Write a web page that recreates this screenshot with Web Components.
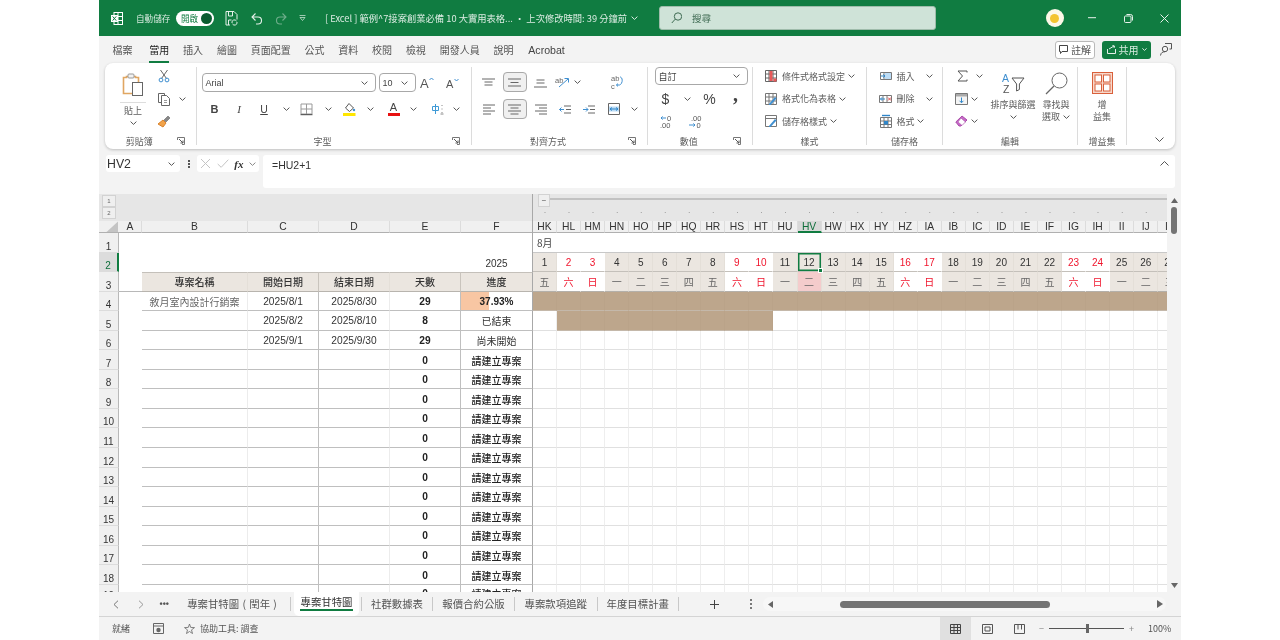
<!DOCTYPE html>
<html lang="zh-Hant">
<head>
<meta charset="utf-8">
<title>Excel</title>
<style>
  html, body { margin: 0; height: 100%; background: #fff; overflow: hidden; }
  body { font-family: "Liberation Sans", "Noto Sans CJK TC", sans-serif; }
</style>
</head>
<body>
<excel-window></excel-window>
<script>
const CJK = `"Noto Sans CJK TC", "Liberation Sans", sans-serif`;
const ARIAL = `"Liberation Sans", "Noto Sans CJK TC", sans-serif`;

const svg = (w, h, body) => `<svg width="${w}" height="${h}" viewBox="0 0 ${w} ${h}" fill="none">${body}</svg>`;
const chev = (c = '#555') => svg(7, 4, `<path d="M.6.6l2.9 2.8L6.4.6" stroke="${c}"/>`);
const box = (w, inner = '', style = '') => `<span class="b" style="width:${w}px;${style}">${inner}</span>`;

const ICONS = {
  paste: svg(22, 24, `<path d="M1.5 4.5h3v-1h9v1h3v16h-15z" stroke="#e0a662" stroke-width="1.6" fill="#fff"/><rect x="6" y="1" width="6" height="4" rx="1" stroke="#999" fill="#f2f2f2"/><rect x="10.5" y="9.5" width="10" height="13" fill="#fff" stroke="#666"/>`),
  cut: svg(12, 14, `<path d="M2.5 1l6 8.5M9.5 1l-6 8.5" stroke="#666"/><circle cx="3" cy="11" r="1.9" stroke="#3f8fd0"/><circle cx="9" cy="11" r="1.9" stroke="#3f8fd0"/>`),
  copy: svg(14, 14, `<path d="M4 10.5H1.5v-9h6V4" stroke="#666"/><path d="M4.5 3.5h5l3 3v7h-8z" stroke="#666" fill="#fff"/><path d="M7 8.5h3M7 10.5h3" stroke="#999"/>`),
  brush: svg(14, 13, `<path d="M6 5l3 3-3 4-5-3z" fill="#f1a34a" stroke="#d9822b"/><path d="M7 5l4-4 2 2-4 4z" fill="#888" stroke="#666" stroke-width=".6"/>`),
  borders: svg(13, 13, `<path d="M1 1h11v10H1zM6.5 1v10M1 6h11" stroke="#9a9a9a"/><path d="M.5 11.7h12" stroke="#444"/>`),
  fill: svg(13, 14, `<path d="M6 1.5l4.5 4.5L6.5 9.5 2.5 6z" stroke="#555" fill="#fff"/><circle cx="11" cy="8" r="1.2" fill="#3f8fd0"/><rect y="11" width="12.5" height="3" fill="#ffe600"/>`),
  fontc: `<span class="ac"><span>A</span><i></i></span>`,
  phon: svg(14, 13, `<path d="M1.5 3.5h6v4h-6zM4.5 1v10" stroke="#3f9ad6"/><path d="M11 2v1M11 5.5v1M11 9v1M9.5 11h3" stroke="#888"/>`),
  top: svg(13, 9, `<path d="M0 1h13M2.5 4h8M2.5 7h8" stroke="#666"/>`),
  mid: svg(13, 11, `<path d="M0 2h13M2.5 5.5h8M0 9h13" stroke="#666"/>`),
  bot: svg(13, 11, `<path d="M2.5 3h8M2.5 6h8M0 10h13" stroke="#666"/>`),
  orient: svg(16, 12, `<text x="0" y="7" font-size="7.5" fill="#666" font-family="Liberation Sans">ab</text><path d="M4 11l9-8M9.5 2.5H13.5V6.5" stroke="#3f8fd0"/>`),
  wrap: svg(12, 15, `<text x="0" y="6" font-size="7.5" fill="#666" font-family="Liberation Sans">ab</text><text x="0" y="14" font-size="7.5" fill="#666" font-family="Liberation Sans">c</text><path d="M9 2c3 0 3 7-.5 8H5.5M7 8.6L5.4 10 7 11.4" stroke="#3f8fd0"/>`),
  al: svg(12, 11, `<path d="M0 1h12M0 4h8M0 7h12M0 10h8" stroke="#666"/>`),
  ac: svg(13, 11, `<path d="M0 1h13M2.5 4h8M0 7h13M2.5 10h8" stroke="#666"/>`),
  ar: svg(12, 11, `<path d="M0 1h12M4 4h8M0 7h12M4 10h8" stroke="#666"/>`),
  outd: svg(12, 9, `<path d="M5 1h7M7 4.5h5M5 8h7" stroke="#666"/><path d="M5 4.5H.5M2.5 2.5l-2 2 2 2" stroke="#3f8fd0"/>`),
  ind: svg(12, 9, `<path d="M5 1h7M7 4.5h5M5 8h7" stroke="#666"/><path d="M0 4.5h5M3 2.5l2 2-2 2" stroke="#3f8fd0"/>`),
  merge: svg(12, 12, `<path d="M.5.5h11v11H.5z" stroke="#666"/><rect x="1" y="3.5" width="10" height="5" fill="#bcdcf5"/><path d="M2 6h8M4 4.5L2 6l2 1.5M8 4.5L10 6 8 7.5" stroke="#2f86c9"/>`),
  dec1: svg(12, 13, `<path d="M6 3H1M2.6 1.4L1 3l1.6 1.6" stroke="#3f8fd0"/><text x="7" y="6" font-size="7.5" fill="#555" font-family="Liberation Sans">0</text><text x="0" y="12.5" font-size="7.5" fill="#555" font-family="Liberation Sans">.00</text>`),
  dec2: svg(14, 13, `<text x="3" y="6" font-size="7.5" fill="#555" font-family="Liberation Sans">.00</text><path d="M1 10h6M5.4 8.4L7 10l-1.6 1.6" stroke="#3f8fd0"/><text x="8.5" y="12.5" font-size="7.5" fill="#555" font-family="Liberation Sans">0</text>`),
  cond: svg(12, 12, `<path d="M.5.5h11v11H.5zM4 .5v11M8 .5v11M.5 4h11M.5 8h11" stroke="#666"/><rect x="4.5" y="1" width="3" height="10" fill="#e85a5a"/><rect x="8.5" y="8.5" width="3" height="3" fill="#e85a5a"/>`),
  table: svg(12, 12, `<path d="M.5.5h11v11H.5zM.5 4h11M4 .5v11M8 .5v11M.5 8h11" stroke="#777"/><path d="M4 11L10 4l1.5 1.5-6 6.5H4z" fill="#3f8fd0"/>`),
  cstyle: svg(12, 12, `<path d="M.5.5h11v11H.5z" stroke="#777"/><path d="M.5 3.5h11" stroke="#777"/><path d="M4 11L10 4l1.5 1.5-6 6.5H4z" fill="#3f8fd0"/>`),
  cins: svg(12, 12, `<path d="M.5 2.5h11v7H.5zM4 2.5v7M8 2.5v7" stroke="#777"/><rect x="5" y="3" width="6" height="6" fill="#bcdcf5"/><path d="M1 6h4M3.4 4.4L5 6 3.4 7.6" stroke="#2f86c9"/>`),
  cdel: svg(13, 12, `<path d="M.5 2.5h12v7H.5zM4 2.5v7M8 2.5v7" stroke="#777"/><path d="M6 6H1.5M3 4.4L1.5 6 3 7.6" stroke="#2f86c9"/><path d="M9 4.5l3 3M12 4.5l-3 3" stroke="#e04b4b"/>`),
  cfmt: svg(12, 14, `<path d="M.5 3.5h11v10H.5zM.5 7h11M.5 10.5h11M4 3.5v10M8 3.5v10" stroke="#777"/><path d="M2 1.5h8" stroke="#2f86c9" stroke-width="1.4"/><rect x="4" y="7" width="4" height="3.5" fill="#2f86c9"/>`),
  sigma: svg(11, 12, `<path d="M10 2.5V1H1l4.5 5L1 11h9V9.5" stroke="#555"/>`),
  fdown: svg(13, 12, `<path d="M.5.5h12v11H.5z" stroke="#777" fill="#f4f4f4"/><path d="M1 1h11v2.5H1z" fill="#aaa"/><path d="M6.5 4.5v5M4.6 7.8l1.9 2 1.9-2" stroke="#2f86c9"/>`),
  eraser: svg(13, 12, `<path d="M.8 7L7 1l5 4-6 6H4z" fill="#c76ac9" stroke="#a94ba8"/><path d="M6 3l4.5 4-3.5 3.5-4-3.6z" fill="#fff" stroke="#a94ba8" stroke-width=".6"/>`),
  sort: svg(23, 21, `<text x="0" y="9" font-size="10.5" fill="#3f8fd0" font-family="Liberation Sans">A</text><text x="1" y="20" font-size="10.5" fill="#555" font-family="Liberation Sans">Z</text><path d="M10 5h12l-4.6 6v5.5l-2.8 1.5V11z" stroke="#555" fill="#fff"/>`),
  find: svg(23, 23, `<circle cx="14.5" cy="8.5" r="7.5" stroke="#666" fill="#fff"/><path d="M9 14L1 22" stroke="#666" stroke-width="1.2"/>`),
  addin: svg(21, 22, `<rect x=".5" y=".5" width="20" height="21" stroke="#d9603b" fill="#f7d9cc"/><rect x="3" y="3" width="6.5" height="7" fill="#fff" stroke="#d9603b"/><rect x="11.5" y="3" width="6.5" height="7" fill="#fff" stroke="#d9603b"/><rect x="3" y="12" width="6.5" height="7" fill="#fff" stroke="#d9603b"/><rect x="11.5" y="12" width="6.5" height="7" fill="#fff" stroke="#d9603b"/>`),
  launch: svg(8, 8, `<path d="M.5 3V.5h7v7H5" stroke="#777"/><path d="M2 2l4 4M6 3.5V6H3.5" stroke="#555"/>`),
  grow: svg(15, 16, `<text x="0" y="13" font-size="13" fill="#555" font-family="Liberation Sans">A</text><path d="M9.5 5l2-2 2 2" stroke="#3f8fd0"/>`),
  shrink: svg(15, 16, `<text x="1" y="13" font-size="11" fill="#555" font-family="Liberation Sans">A</text><path d="M9.5 4l2 2 2-2" stroke="#3f8fd0"/>`),
};

class TitleBar extends HTMLElement {
  connectedCallback() {
    const shadow = this.attachShadow({ mode: 'open' });
    shadow.innerHTML = `
      <style>
        :host { display: flex; align-items: center; height: 36px; background: #107c41; color: #fff; font: 8.6px ${CJK}; }
        svg { display: block; flex: none; }
        .auto { margin-left: 13px; width: 40px; color: #d8ebe0; font-size: 8.6px; white-space: nowrap; }
        .toggle { display: flex; align-items: center; justify-content: space-between; box-sizing: border-box; width: 38px; height: 15px; padding: 0 2px 0 5px; background: #fff; border-radius: 8px; color: #107c41; font-size: 8.6px; }
        .toggle i { width: 11px; height: 11px; background: #0b5c30; border-radius: 50%; }
        .doc { width: 305px; white-space: nowrap; font-size: 9.3px; color: #dcece3; display: flex; align-items: center; gap: 4px; }
        .search { display: flex; align-items: center; box-sizing: border-box; width: 276.5px; height: 24px; margin-left: 28px; padding-left: 11px; background: #cfe3d8; border: 1px solid #9fbcab; border-radius: 3px; color: #3f6b53; font-size: 9.6px; gap: 10px; }
        .avatar { width: 18px; height: 18px; margin-left: 110px; border-radius: 50%; background: #fdf8e8; display: flex; align-items: center; justify-content: center; }
        .avatar i { width: 9px; height: 9px; border-radius: 50%; background: #f4c430; }
      </style>
      <span style="margin-left:12px">${svg(12, 13, `<rect x="3" y=".5" width="8.5" height="12" stroke="#fff" fill="#107c41"/><path d="M7 .5v12M3 4.5h8.5M3 8.5h8.5" stroke="#fff"/><rect y="3" width="7" height="7" fill="#fff"/><path d="M1.6 4.4l3.6 4.2M5.2 4.4L1.6 8.6" stroke="#107c41"/>`)}</span>
      <span class="auto">自動儲存</span>
      <span class="toggle">開啟<i></i></span>
      <span style="margin-left:11px">${svg(13, 15, `<path d="M1 .5h8l3 3v5M5 14H1V.5" stroke="#e4f0e9"/><path d="M3.5 1v4h4V1M3.5 14V9h3" stroke="#e4f0e9"/><path d="M7 12a2.5 2.5 0 0 1 4.5-2M12 11a2.5 2.5 0 0 1-4.5 2" stroke="#e4f0e9"/>`)}</span>
      <span style="margin-left:13px">${svg(11, 13, `<path d="M1.5 5h5.5a3 3 0 0 1 0 7H5M4.5 1.5L1 5l3.5 3.5" stroke="#e4f0e9" stroke-width="1.1"/>`)}</span>
      <span style="margin-left:14px">${svg(11, 13, `<path d="M9.5 5H4a3 3 0 0 0 0 7h2M6.5 1.5L10 5 6.5 8.5" stroke="#6fae8b" stroke-width="1.1"/>`)}</span>
      <span style="margin-left:12px">${svg(7, 6, `<path d="M.5 .5h6M1 2.5h5l-2.5 3z" stroke="#dcece3" stroke-width=".7"/>`)}</span>
      <span class="doc" style="margin-left:19px">[ Excel ] 範例^7接案創業必備 10 大實用表格... • 上次修改時間: 39 分鐘前 ${svg(7, 4, `<path d="M.6.6l2.9 2.8L6.4.6" stroke="#dcece3"/>`)}</span>
      <span class="search" style="margin-left:29px">${svg(11, 12, `<circle cx="7" cy="4.5" r="3.7" stroke="#3f6b53"/><path d="M4.2 7.2L.8 11" stroke="#3f6b53"/>`)}搜尋</span>
      <span class="avatar"><i></i></span>
      <span style="margin-left:24px">${svg(8, 2, `<path d="M0 .7h8" stroke="#e8f2ec"/>`)}</span>
      <span style="margin-left:28px">${svg(9, 9, `<rect x=".5" y="2" width="6.5" height="6.5" rx="1" stroke="#e8f2ec"/><path d="M2.5.5h4a2 2 0 0 1 2 2v4" stroke="#e8f2ec"/>`)}</span>
      <span style="margin-left:27px">${svg(9, 9, `<path d="M.5.5l8 8M8.5.5l-8 8" stroke="#e8f2ec"/>`)}</span>`;
  }
}

class RibbonTabs extends HTMLElement {
  connectedCallback() {
    const shadow = this.attachShadow({ mode: 'open' });
    const tabs = ['檔案', '當用', '插入', '繪圖', '頁面配置', '公式', '資料', '校閱', '檢視', '開發人員', '說明', 'Acrobat'];
    shadow.innerHTML = `
      <style>
        :host { display: flex; align-items: center; height: 27px; padding-left: 13.5px; background: #f3f3f3; font: 10px ${CJK}; color: #555; }
        .tabs { display: flex; gap: 13.8px; flex: 1; }
        .tab { position: relative; line-height: 26px; white-space: nowrap; }
        .tab.on { margin-left: 3px; color: #222; }
        .tab.on::after { content: ""; position: absolute; left: 0; right: 0; bottom: 0; height: 2px; background: #107c41; }
        .tab.lat { margin-left: 1px; font-family: ${ARIAL}; font-size: 10.6px; color: #444; }
        .cmt, .share { display: flex; align-items: center; justify-content: center; box-sizing: border-box; height: 18px; border-radius: 3px; gap: 3px; }
        .cmt { width: 40px; background: #fff; border: 1px solid #b9b9b9; color: #555; }
        .share { width: 49px; margin-left: 7px; background: #107c41; color: #d7ebdf; }
        svg { display: block; flex: none; }
        .me { margin: 0 9px 0 9px; }
      </style>
      <div class="tabs">${tabs.map((t) => `<span class="tab${t === '當用' ? ' on' : ''}${t === 'Acrobat' ? ' lat' : ''}">${t}</span>`).join('')}</div>
      <span class="cmt">${svg(9, 9, `<path d="M.5.5h8v6H3L1.5 8.5v-2h-1z" stroke="#444"/>`)}註解</span>
      <span class="share">${svg(9, 9, `<path d="M.5 4v4.5h8V4M2 4l5-3M5.5.5L7.5 1 7 3" stroke="#e4f0e9"/>`)}共用${svg(5, 3, `<path d="M.4.4l2.1 2 2.1-2" stroke="#d7ebdf"/>`)}</span>
      <span class="me">${svg(12, 13, `<circle cx="5" cy="6" r="2.7" stroke="#555"/><path d="M.5 12.5c.5-3 2-3.7 4.5-3.7" stroke="#555"/><path d="M5 .5h6.5v5.5H9.5" stroke="#555"/>`)}</span>`;
  }
}

// one block of the ribbon with its caption under it
class RibbonGroup extends HTMLElement {
  connectedCallback() {
    const shadow = this.attachShadow({ mode: 'open' });
    const launcher = this.hasAttribute('launcher');
    shadow.innerHTML = `
      <style>
        :host { display: block; flex: none; box-sizing: border-box; height: 78px; margin-top: 4px; border-right: 1px solid #dcdcdc; font: 9px ${CJK}; color: #5c5c5c; }
        .body { display: flow-root; height: 66px; }
        .cap { display: flex; align-items: center; height: 16px; }
        .cap span { flex: 1; text-align: center; }
        .cap i { width: 22px; display: flex; justify-content: flex-start; padding-left: 3px; box-sizing: border-box; }
        svg { display: block; }
      </style>
      <div class="body"><slot></slot></div>
      <div class="cap"><span>${this.getAttribute('label')}</span>${launcher ? `<i>${ICONS.launch}</i>` : ''}</div>`;
    this.style.width = this.getAttribute('width') + 'px';
  }
}

class RibbonBar extends HTMLElement {
  connectedCallback() {
    const shadow = this.attachShadow({ mode: 'open' });
    const I = ICONS;
    const c = chev();
    const listRow = (icon, label, w, ml = 12) => `<div class="fr" style="padding-left:${ml}px">${box(12, icon)}<span style="margin-left:5px;white-space:nowrap">${label}</span>${w}</div>`;
    shadow.innerHTML = `
      <style>
        :host { display: flex; box-sizing: border-box; width: 1070px; height: 86px; margin-left: 6px; background: #fff; border-radius: 8px; box-shadow: 0 1px 3px rgba(0,0,0,.22); font: 9px ${CJK}; color: #5c5c5c; }
        svg { display: block; flex: none; }
        .b { display: flex; align-items: center; justify-content: center; flex: none; height: 100%; }
        .fr { display: flex; align-items: center; }
        .three { display: grid; grid-auto-rows: 22.5px; margin-top: -2px; }
        .sel { display: flex; align-items: center; justify-content: space-between; box-sizing: border-box; height: 19px; padding: 0 7px 0 3px; border: 1px solid #a8a8a8; border-radius: 4px; font: 9px ${ARIAL}; color: #444; flex: none; }
        .on { background: #f0f0f0; outline: 1px solid #a9a9a9; outline-offset: -1px; border-radius: 4px; }
        .un { text-decoration: underline; }
        .ac { display: flex; flex-direction: column; align-items: center; font: 11px "Liberation Sans"; line-height: 10px; color: #444; }
        .ac i { width: 12px; height: 3px; margin-top: 1px; background: #e81010; }
        .col { display: flex; flex-direction: column; align-items: center; flex: none; line-height: 12px; white-space: nowrap; }
      </style>

      <ribbon-group label="剪貼簿" launcher width="91.5">
        <div class="fr" style="align-items:flex-start">
          <div class="col" style="width:46px;margin-left:5px;padding-top:6px">
            ${I.paste}
            <span style="width:26px;height:1px;background:#ddd;margin:5px 0 2px"></span>
            <span>貼上</span>
            <span style="margin-top:4px">${c}</span>
          </div>
          <div class="three">
            <div class="fr">${box(16, I.cut)}</div>
            <div class="fr">${box(16, I.copy)}${box(20, c)}</div>
            <div class="fr">${box(16, I.brush)}</div>
          </div>
        </div>
      </ribbon-group>

      <ribbon-group label="字型" launcher width="275">
        <div class="fr" style="height:19px;margin-top:6px;padding-left:5px">
          <span class="sel" style="width:174px">Arial${c}</span>
          <span class="sel" style="width:37px;margin-left:3px">10${c}</span>
          ${box(24, I.grow)}
          ${box(25, I.shrink)}
        </div>
        <div class="fr" style="height:20px;margin-top:7px;padding-left:6px">
          ${box(24, 'B', 'font:bold 11px Liberation Sans;color:#444')}
          ${box(25, 'I', 'font:italic 11px Liberation Serif;color:#444')}
          ${box(25, '<span class="un">U</span>', 'font:10.5px Liberation Sans;color:#444')}
          ${box(20, c)}${box(20, I.borders)}${box(24, c)}
          ${box(18, I.fill)}${box(24, c)}
          ${box(22, I.fontc)}${box(18, c)}
          ${box(30, I.phon)}${box(8, c)}
        </div>
      </ribbon-group>

      <ribbon-group label="對齊方式" launcher width="176">
        <div class="fr" style="height:20px;margin-top:5px;padding-left:5px">
          ${box(24, I.top)}<span style="width:2px"></span>
          <span class="b on" style="width:24px">${I.mid}</span><span style="width:2px"></span>
          ${box(24, I.bot)}
          ${box(19, I.orient, 'margin-left:1px')}${box(9, c)}
          ${box(24, I.wrap, 'margin-left:23px')}
        </div>
        <div class="fr" style="height:20px;margin-top:7px;padding-left:5px">
          ${box(24, I.al)}<span style="width:2px"></span>
          <span class="b on" style="width:24px">${I.ac}</span><span style="width:2px"></span>
          ${box(24, I.ar)}${box(24, I.outd)}${box(25, I.ind)}${box(25, I.merge)}${box(16, c)}
        </div>
      </ribbon-group>

      <ribbon-group label="數值" launcher width="105.5">
        <span class="sel" style="width:93px;height:18px;margin-left:7px;font-family:${CJK}">自訂${c}</span>
        <div class="fr" style="height:22px;margin-top:3px;padding-left:6px">
          ${box(24, '$', 'font:14px Liberation Sans;color:#444')}${box(20, c)}
          ${box(24, '%', 'font:14px Liberation Sans;color:#444')}
          ${box(24, ',', 'font:bold 20px Liberation Serif;color:#444;margin-left:2px;padding-bottom:9px;box-sizing:border-box')}
        </div>
        <div class="fr" style="height:22px;padding-left:6px">
          ${box(24, I.dec1)}${box(24, I.dec2, 'margin-left:5px')}
        </div>
      </ribbon-group>

      <ribbon-group label="樣式" width="114">
        <div class="three">
          ${listRow(I.cond, '條件式格式設定', `<span style="margin-left:3px">${c}</span>`)}
          ${listRow(I.table, '格式化為表格', `<span style="margin-left:3px">${c}</span>`)}
          ${listRow(I.cstyle, '儲存格樣式', `<span style="margin-left:3px">${c}</span>`)}
        </div>
      </ribbon-group>

      <ribbon-group label="儲存格" width="76">
        <div class="three">
          ${listRow(I.cins, '插入', `<span style="margin-left:11px">${c}</span>`, 12.5)}
          ${listRow(I.cdel, '刪除', `<span style="margin-left:11px">${c}</span>`, 12.5)}
          ${listRow(I.cfmt, '格式', `<span style="margin-left:2px">${c}</span>`, 12.5)}
        </div>
      </ribbon-group>

      <ribbon-group label="編輯" width="135">
        <div class="fr" style="align-items:flex-start">
          <div class="three" style="width:47px">
            <div class="fr" style="padding-left:13px">${box(12, I.sigma)}${box(22, c)}</div>
            <div class="fr" style="padding-left:12px">${box(13, I.fdown)}${box(13, c)}</div>
            <div class="fr" style="padding-left:12px">${box(13, I.eraser)}${box(13, c)}</div>
          </div>
          <div class="col" style="width:46px;padding-top:6px">
            ${I.sort}
            <span style="margin-top:5px">排序與篩選</span>
            <span style="margin-top:4px">${c}</span>
          </div>
          <div class="col" style="width:40px;padding-top:5px">
            ${I.find}
            <span style="margin-top:4px">尋找與</span>
            <span class="fr" style="gap:3px">選取${c}</span>
          </div>
        </div>
      </ribbon-group>

      <ribbon-group label="增益集" width="49">
        <div class="col" style="padding-top:5px">
          ${I.addin}
          <span style="margin-top:5px">增</span>
          <span>益集</span>
        </div>
      </ribbon-group>

      <div class="fr" style="flex:1;justify-content:flex-end;align-items:flex-end;padding:0 11px 7px 0">${svg(9, 5, `<path d="M.5.5l4 4 4-4" stroke="#555"/>`)}</div>`;
  }
}

class FormulaBar extends HTMLElement {
  connectedCallback() {
    const shadow = this.attachShadow({ mode: 'open' });
    shadow.innerHTML = `
      <style>
        :host { display: flex; align-items: flex-start; height: 33px; margin-top: 6px; padding-left: 7px; font: 12px ${ARIAL}; color: #333; }
        svg { display: block; }
        .box { display: flex; align-items: center; box-sizing: border-box; height: 17px; background: #fff; border-radius: 3px; flex: none; }
        .name { width: 74px; padding: 0 5px 0 1px; justify-content: space-between; font-size: 12.3px; }
        .fx { width: 62px; margin-left: 9px; padding: 0 3px 0 3px; justify-content: space-between; }
        .fx b { font: italic bold 11px "Liberation Serif"; }
        .dots { display: flex; flex-direction: column; gap: 1px; width: 0; margin-left: 8px; }
        .dots i { width: 2px; height: 2px; background: #555; }
        .edit { display: flex; box-sizing: border-box; justify-content: space-between; width: 912px; height: 33px; margin-left: 4px; padding: 3px 3px 0 9px; background: #fff; border-radius: 3px; font-size: 10.5px; line-height: 13px; flex: none; }
        .edit span { padding-top: 1px; }
      </style>
      <div class="box name">HV2${chev()}</div>
      <div class="dots" style="height:17px;justify-content:center"><i></i><i></i><i></i></div>
      <div class="box fx">${svg(11, 11, `<path d="M1 1l9 9M10 1l-9 9" stroke="#c4c4c4"/>`)}${svg(12, 9, `<path d="M.7 5l3.5 3.3L11.3.7" stroke="#c4c4c4"/>`)}<b>fx</b>${chev('#888')}</div>
      <div class="edit"><span>=HU2+1</span><div style="padding:3px 3px 0 0">${svg(9, 5, `<path d="M.5 4.5l4-4 4 4" stroke="#555"/>`)}</div></div>`;
  }
}

// column labels of the calendar, from HK on
function calendarColumns() {
  const names = [];
  const letters = 'ABCDEFGHIJKLMNOPQRSTUVWXYZ';
  let a = 7, b = 10;
  for (let i = 0; i < 27; i++) {
    names.push(letters[a] + letters[b]);
    b++;
    if (b === 26) { b = 0; a++; }
  }
  return names;
}

class SheetGrid extends HTMLElement {
  connectedCallback() {
    const shadow = this.attachShadow({ mode: 'open' });
    const cols = calendarColumns();
    const week = ['五', '六', '日', '一', '二', '三', '四'];
    const projects = [
      ['敘月室內設計行銷案', '2025/8/1', '2025/8/30', '29', '37.93%'],
      ['', '2025/8/2', '2025/8/10', '8', '已結束'],
      ['', '2025/9/1', '2025/9/30', '29', '尚未開始'],
    ];
    let html = `
      <div class="oleft" style="grid-column: 1 / 8">
        <div class="obtns"><span>1</span><span>2</span></div>
      </div>
      <div class="oright" style="grid-column: 8 / -1">
        <div class="otop"><span class="minus">−</span><i></i></div>
        <div class="odots">${cols.map(() => '<span>·</span>').join('')}</div>
      </div>`;

    // column header
    html += `<div class="corner">${svg(13, 11, `<path d="M13 .5V11H1.5z" fill="#c4c4c4"/>`)}</div>`;
    ['A', 'B', 'C', 'D', 'E', 'F'].forEach((n) => { html += `<div class="ch${n === 'F' ? ' fz' : ''}">${n}</div>`; });
    cols.forEach((n) => { html += `<div class="ch${n === 'HV' ? ' act' : ''}">${n}</div>`; });

    const rh = (n) => `<div class="rh${n === 2 ? ' act' : ''}">${n}</div>`;

    // row 1
    html += rh(1) + '<div class="w" style="grid-column: span 5"></div><div class="w fz"></div>';
    html += `<div class="w b1 month" style="grid-column: span 27">8月</div>`;

    // row 2: days of the month
    html += rh(2) + `<div class="w" style="grid-column: span 4"></div><div class="w"></div><div class="w fz yr">2025</div>`;
    cols.forEach((n, i) => {
      const wd = week[i % 7];
      const off = wd === '六' || wd === '日';
      html += `<div class="d${off ? ' off' : ''}${n === 'HV' ? ' sel' : ''}">${i + 1}</div>`;
    });

    // row 3: table head and weekday names
    html += rh(3) + '<div class="w bb"></div>';
    ['專案名稱', '開始日期', '結束日期', '天數', '進度'].forEach((t, i) => {
      html += `<div class="th${i === 4 ? ' fz' : ''}${i === 1 || i === 3 ? ' lt' : ''}">${t}</div>`;
    });
    cols.forEach((n, i) => {
      const wd = week[i % 7];
      const off = wd === '六' || wd === '日';
      html += `<div class="wd${off ? ' off' : ''}${n === 'HV' ? ' pick' : ''}">${wd}</div>`;
    });

    // rows 4 to 19
    for (let r = 4; r <= 19; r++) {
      const p = projects[r - 4] || ['', '', '', '0', '請建立專案'];
      html += rh(r) + `<div class="w"></div>`;
      html += `<div class="c name">${p[0]}</div><div class="c dk">${p[1]}</div><div class="c">${p[2]}</div><div class="c dk bold">${p[3]}</div>`;
      const status = r === 4 ? 'pct' : (r > 6 ? 'req' : '');
      html += `<div class="c fz st ${status}">${p[4]}</div>`;
      cols.forEach((n, i) => {
        const filled = r === 4 || (r === 5 && i >= 1 && i <= 9);
        html += `<div class="g${filled ? ' bar' : ''}"></div>`;
      });
    }

    shadow.innerHTML = `
      <style>
        :host { display: block; flex: none; width: 1068px; height: 398px; overflow: hidden; background: #fff; font: 10px ${ARIAL}; color: #222; }
        .grid { display: grid; grid-template-columns: 20px 23px 106px 71px 71px 71px 72px repeat(27, 24.05px); grid-template-rows: 27px 12px repeat(18, 19.56px); }
        .grid > div { box-sizing: border-box; min-width: 0; white-space: nowrap; }
        svg { display: block; }
        .oleft { background: #e6e6e6; border-right: 1px solid #a8a8a8; }
        .obtns { display: flex; flex-direction: column; width: 14px; margin-left: 3px; padding-top: 1px; }
        .obtns span { height: 12px; background: #efefef; border: 1px solid #d2d2d2; box-sizing: border-box; font-size: 6px; line-height: 10px; text-align: center; color: #666; }
        .oright { background: #e6e6e6; }
        .otop { display: flex; align-items: center; height: 13px; padding-left: 5px; }
        .minus { width: 12px; height: 13px; background: #efefef; border: 1px solid #d2d2d2; box-sizing: border-box; font-size: 8px; line-height: 11px; text-align: center; color: #555; flex: none; }
        .otop i { flex: 1; height: 2px; margin-top: -3px; background: #c2c2c2; }
        .odots { display: flex; height: 14px; }
        .odots span { flex: none; width: 24.05px; text-align: center; line-height: 10px; color: #999; font-size: 9px; }
        .corner { background: #f0f0f0; border-bottom: 1px solid #b0b0b0; display: flex; align-items: flex-end; justify-content: flex-end; padding-right: 1px; }
        .ch { display: flex; align-items: center; justify-content: center; background: #f0f0f0; border-bottom: 1px solid #b0b0b0; border-right: 1px solid #dcdcdc; font-size: 10.3px; line-height: 11px; color: #333; }
        .ch.fz { border-right: 1px solid #a8a8a8; }
        .ch.act { background: #d8d8d8; color: #0e6e3a; border-bottom: 2px solid #107c41; }
        .rh { display: flex; align-items: flex-end; justify-content: center; background: #f0f0f0; border-bottom: 1px solid #dcdcdc; border-right: 1px solid #b8b8b8; font-size: 10px; line-height: 11px; color: #333; }
        .rh.act { background: #dcdcdc; border-right: 2px solid #107c41; color: #0e6e3a; }
        .w { background: #fff; }
        .bb { border-bottom: 1px solid #b8b8b8; }
        .fz { border-right: 1px solid #a8a8a8 !important; }
        .yr { display: flex; align-items: flex-end; justify-content: center; padding-bottom: 3px; color: #333; }
        .b1 { border-bottom: 1px solid #c8c8c8; }
        .month { display: flex; align-items: center; padding-left: 4px; font-family: ${CJK}; font-size: 10px; color: #444; }
        .d, .wd { display: flex; align-items: center; justify-content: center; background: #ebe6e0; border-right: 1px solid #e4dfd8; }
        .d { border-bottom: 1px solid #c4c0ba; padding-top: 1px; color: #333; position: relative; }
        .wd { font-family: ${CJK}; font-size: 10px; color: #666; border-bottom: 1px solid #b4b0aa; }
        .d.off, .wd.off { background: #fff; color: #f0142c; border-right-color: #fff; }
        .d.sel { box-shadow: inset 0 0 0 1.5px #107c41; }
        .d.sel::after { content: ""; position: absolute; right: -2px; bottom: -2px; width: 3px; height: 3px; background: #107c41; border: 1px solid #fff; z-index: 1; }
        .wd.pick { background: #f4cccc; }
        .th { display: flex; align-items: center; justify-content: center; background: #ebe6e0; border-top: 1px solid #c4c0ba; border-bottom: 1px solid #b8b4ae; border-right: 1px solid #e4dfd8; font-family: ${CJK}; font-size: 10px; font-weight: 500; color: #333; }
        .th.lt { border-right-color: #c9c4bd; }
        .c { display: flex; align-items: center; justify-content: center; padding-top: 1px; border-bottom: 1px solid #bfbfbf; border-right: 1px solid #ececec; font-size: 10.2px; color: #333; }
        .c.dk { border-right-color: #bfbfbf; }
        .c.name { font-family: ${CJK}; font-size: 10px; color: #666; }
        .c.bold { font-weight: bold; color: #222; }
        .c.st { font-family: ${CJK}; font-size: 10px; color: #333; }
        .c.req { font-weight: 500; color: #222; }
        .c.pct { font-family: ${ARIAL}; font-weight: bold; color: #222; background: linear-gradient(90deg, #f8c6a3 0, #f8c6a3 28px, #fff 28px); }
        .g { border-bottom: 1px solid #e0e0e0; border-right: 1px solid #eeeeee; }
        .g.bar { background: #bda68c; border-right-color: #baa389; border-bottom-color: #c4b8aa; }
      </style>
      <div class="grid">${html}</div>`;
  }
}

class VScroll extends HTMLElement {
  connectedCallback() {
    const shadow = this.attachShadow({ mode: 'open' });
    shadow.innerHTML = `
      <style>
        :host { display: flex; flex-direction: column; align-items: center; flex: none; width: 14px; height: 398px; background: #f3f3f3; }
        svg { display: block; }
        .thumb { width: 6px; height: 27px; margin-top: 4px; background: #747474; border-radius: 3px; }
        .gap { flex: 1; }
      </style>
      <div style="margin-top:4px">${svg(7, 5, `<path d="M3.5 0L7 5H0z" fill="#666"/>`)}</div>
      <div class="thumb"></div>
      <div class="gap"></div>
      <div style="margin-bottom:4px">${svg(7, 5, `<path d="M3.5 5L7 0H0z" fill="#666"/>`)}</div>`;
  }
}

class SheetTabs extends HTMLElement {
  connectedCallback() {
    const shadow = this.attachShadow({ mode: 'open' });
    const tab = (t, w) => `<span class="t" style="width:${w}px">${t}</span><i class="sep"></i>`;
    shadow.innerHTML = `
      <style>
        :host { display: flex; align-items: center; height: 24px; background: #f3f3f3; font: 10.4px ${CJK}; color: #555; }
        svg { display: block; flex: none; }
        .b { display: flex; align-items: center; justify-content: center; flex: none; height: 100%; }
        .t { flex: none; padding-bottom: 1px; text-align: center; white-space: nowrap; word-spacing: 1px; }
        .sep { flex: none; width: 1px; height: 14px; background: #c8c8c8; }
        .on { display: flex; flex-direction: column; align-items: center; flex: none; box-sizing: border-box; width: 65px; height: 24px; margin-left: 3px; padding-top: 3px; background: #fff; border-radius: 0 0 5px 5px; color: #333; line-height: 13px; }
        .on::after { content: ""; width: 53px; height: 2px; margin-top: 1px; background: #107c41; }
        .track { display: flex; align-items: center; flex: none; box-sizing: border-box; width: 403px; height: 14px; margin-left: 10px; padding: 0 3px 0 5px; background: #f7f7f7; border-radius: 7px; }
        .thumb { width: 210px; height: 7px; margin-left: 67px; margin-right: auto; background: #747474; border-radius: 4px; flex: none; }
      </style>
      <span class="b" style="width:20px;justify-content:flex-end">${svg(6, 9, `<path d="M5 .7L1 4.5 5 8.3" stroke="#777"/>`)}</span>
      <span class="b" style="width:25px;justify-content:flex-end">${svg(6, 9, `<path d="M1 .7L5 4.5 1 8.3" stroke="#999"/>`)}</span>
      <span class="b" style="width:25px;justify-content:flex-end;color:#555;font:bold 9px 'Liberation Sans'">•••</span>
      <span style="width:5px;flex:none"></span>
      <span class="t" style="width:116px">專案甘特圖 ( 閏年 )</span><i class="sep"></i>
      <span class="on">專案甘特圖</span>
      <i class="sep" style="margin-left:2px"></i>
      ${tab('社群數據表', 70)}
      ${tab('報價合約公版', 81)}
      ${tab('專案款項追蹤', 81.5)}
      ${tab('年度目標計畫', 80.5)}
      <span class="b" style="width:70px">${svg(9, 9, `<path d="M4.5 0v9M0 4.5h9" stroke="#444"/>`)}</span>
      <span class="b" style="width:4px">${svg(2, 10, `<path d="M1 0v2M1 4v2M1 8v2" stroke="#444" stroke-width="1.4"/>`)}</span>
      <div class="track">
        ${svg(5, 7, `<path d="M5 0v7L0 3.5z" fill="#666"/>`)}
        <span class="thumb"></span>
        ${svg(6, 8, `<path d="M0 0v8l6-4z" fill="#666"/>`)}
      </div>`;
  }
}

class StatusBar extends HTMLElement {
  connectedCallback() {
    const shadow = this.attachShadow({ mode: 'open' });
    shadow.innerHTML = `
      <style>
        :host { display: flex; align-items: center; box-sizing: border-box; height: 24px; padding-left: 13px; background: #f3f3f3; border-top: 1px solid #d4d4d4; font: 9px ${CJK}; color: #555; }
        svg { display: block; flex: none; }
        .view { display: flex; align-items: center; justify-content: center; flex: none; height: 23px; }
        .view.on { background: #e0e0e0; }
        .slider { display: flex; align-items: center; flex: none; width: 75px; height: 1px; background: #555; margin: 0 5px; }
        .slider i { width: 3px; height: 9px; margin-left: 37px; background: #666; }
      </style>
      <span style="width:41px;flex:none">就緒</span>
      <span style="width:31px;flex:none">${svg(11, 11, `<path d="M.5.5h10v10H.5zM.5 3h10" stroke="#666"/><circle cx="5.5" cy="7" r="2.2" fill="#666"/>`)}</span>
      <span style="width:16px;flex:none">${svg(11, 11, `<path d="M5.5 1l1.2 3.4 3.8.2-3 2.3 1 3.6-3-2-3 2 1-3.6-3-2.3 3.8-.2z" stroke="#666" stroke-width=".8"/>`)}</span>
      <span style="width:740px;flex:none">協助工具: 調查</span>
      <span class="view on" style="width:31px">${svg(11, 10, `<path d="M.5.5h10v9H.5zM4 .5v9M7.5.5v9M.5 3.5h10M.5 6.5h10" stroke="#444"/>`)}</span>
      <span class="view" style="width:32px">${svg(11, 10, `<path d="M.5.5h10v9H.5z" stroke="#555"/><path d="M3 3h5v4H3z" stroke="#555"/>`)}</span>
      <span class="view" style="width:32px">${svg(11, 10, `<path d="M.5.5v9h10V.5M4 .5v5M7.5.5v5M.5.5h10" stroke="#555"/>`)}</span>
      <span style="margin-left:4px;color:#888;font-family:${ARIAL}">−</span>
      <span class="slider"><i></i></span>
      <span style="color:#888;font-family:${ARIAL}">+</span>
      <span style="margin-left:14px;font-family:${ARIAL};font-size:9.2px">100%</span>`;
  }
}

class ExcelWindow extends HTMLElement {
  connectedCallback() {
    const shadow = this.attachShadow({ mode: 'open' });
    shadow.innerHTML = `
      <style>
        :host { display: block; width: 1082px; height: 640px; margin-left: 99px; background: #f3f3f3; overflow: hidden; filter: blur(.3px); }
        .sheet { display: flex; margin-top: 6px; }
      </style>
      <title-bar></title-bar>
      <ribbon-tabs></ribbon-tabs>
      <ribbon-bar></ribbon-bar>
      <formula-bar></formula-bar>
      <div class="sheet"><sheet-grid></sheet-grid><v-scroll></v-scroll></div>
      <sheet-tabs></sheet-tabs>
      <status-bar></status-bar>`;
  }
}

customElements.define('ribbon-group', RibbonGroup);
customElements.define('title-bar', TitleBar);
customElements.define('ribbon-tabs', RibbonTabs);
customElements.define('ribbon-bar', RibbonBar);
customElements.define('formula-bar', FormulaBar);
customElements.define('sheet-grid', SheetGrid);
customElements.define('v-scroll', VScroll);
customElements.define('sheet-tabs', SheetTabs);
customElements.define('status-bar', StatusBar);
customElements.define('excel-window', ExcelWindow);
</script>
</body>
</html>
